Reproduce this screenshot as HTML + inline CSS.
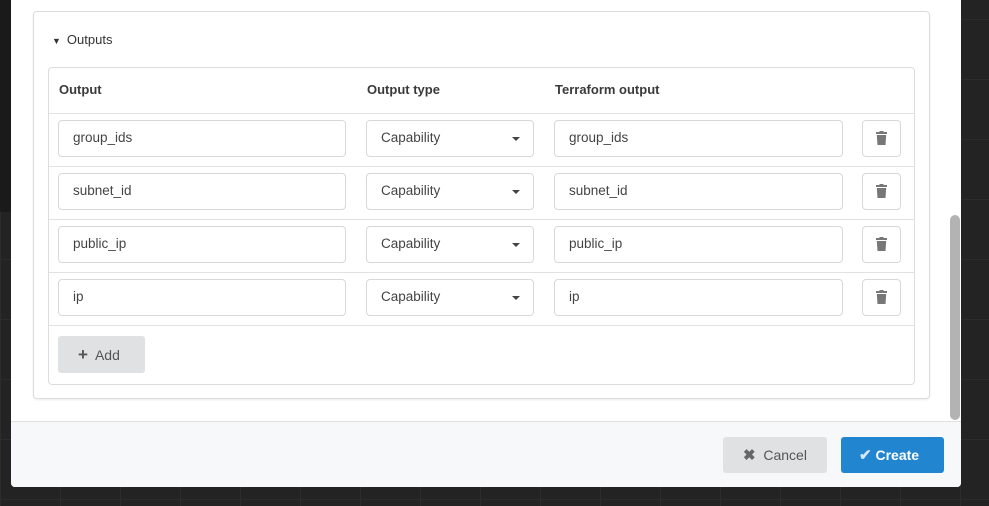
<!DOCTYPE html>
<html><head><style>
body{margin:0;width:989px;height:506px;background:#232323;position:relative;overflow:hidden;font-family:"Liberation Sans",sans-serif;}
.grid{position:absolute;inset:0;background-image:linear-gradient(#2c2c2c 1px,transparent 1px),linear-gradient(90deg,#2c2c2c 1px,transparent 1px);background-size:60px 60px;background-position:0 19px}
.modal{position:absolute;left:11px;top:-10px;width:950px;height:497px;background:#fff;border-radius:4px;overflow:hidden}
.seg{position:absolute;left:22px;top:21px;width:895px;height:386px;border:1px solid #dcdcdc;border-radius:4px;box-shadow:0 1px 2px rgba(0,0,0,.08)}
.title{position:absolute;left:18px;top:20px;font-size:13px;color:#333}
.tbl{position:absolute;left:14px;top:55px;width:865px;height:316px;border:1px solid #ddd;border-radius:4px}
.th{position:absolute;top:14px;font-size:13px;font-weight:bold;color:#3a3a3a}
.line{position:absolute;left:0;right:0;height:1px;background:#e2e2e2}
.in{position:absolute;border:1px solid #d8d8d8;border-radius:4px;box-sizing:border-box;font-size:13.5px;color:#444;padding:9px 14px 0;height:37px}
.del{position:absolute;width:39px;height:37px;border:1px solid #d8d8d8;border-radius:4px;box-sizing:border-box}
.caret{position:absolute;right:13px;top:16px;border-left:4px solid transparent;border-right:4px solid transparent;border-top:4px solid #444}
.foot{position:absolute;left:0;top:431px;width:950px;height:66px;background:#f7f8fa;border-top:1px solid #e0e0e0}
.btn{position:absolute;height:36px;border-radius:3px;font-size:14px;line-height:36px;box-sizing:border-box}
.sb{position:absolute;left:939px;top:225px;width:10px;height:205px;background:#b3b3b3;border-radius:5px}
</style></head><body>
<div class="grid"></div>
<div style="position:absolute;left:0;top:0;width:11px;height:212px;background:#1a1a1a"></div>
<div class="modal">
<div class="seg">
<div class="title"><span style="font-size:9px;margin-right:6px">▼</span>Outputs</div>
<div class="tbl">
<div class="th" style="left:10px">Output</div>
<div class="th" style="left:318px">Output type</div>
<div class="th" style="left:506px">Terraform output</div>
<div class="line" style="top:45px"></div>
<div class="line" style="top:98px"></div>
<div class="line" style="top:151px"></div>
<div class="line" style="top:204px"></div>
<div class="line" style="top:257px"></div>
</div>
</div>
<div class="sb"></div>
<div class="foot">
<div class="btn" style="left:712px;top:15px;width:104px;background:#e0e1e2;color:#555;padding-left:20px"><b style="font-size:15px;color:#666">✖</b>&nbsp; Cancel</div>
<div class="btn" style="left:830px;top:15px;width:103px;background:#2185d0;color:#fff;font-weight:bold;padding-left:18px"><span style="font-size:15px;color:#d6e8f7">✔</span> Create</div>
</div>
</div>
<div id="rows"></div>
<div class="btn" style="left:58px;top:336px;width:87px;height:37px;background:#e0e1e2;color:#555;padding-left:20px;line-height:37px"><b style="font-size:17px">+</b>&nbsp; Add</div>
<script>
var n=["group_ids","subnet_id","public_ip","ip"],h="";
n.forEach(function(t,i){var y=120+53*i;
h+='<div class="in" style="left:58px;top:'+y+'px;width:288px">'+t+'</div>';
h+='<div class="in" style="left:366px;top:'+y+'px;width:168px">Capability<div class="caret"></div></div>';
h+='<div class="in" style="left:554px;top:'+y+'px;width:289px">'+t+'</div>';
h+='<div class="del" style="left:862px;top:'+y+'px"><svg width="37" height="35" viewBox="0 0 37 35"><rect x="13" y="11" width="11" height="2" fill="#777"/><rect x="16.5" y="10" width="4" height="2" fill="#777"/><path d="M13.8 14h9.4l-0.7 10h-8z" fill="#777"/></svg></div>';});
document.getElementById("rows").innerHTML=h;
</script>
</body></html>
